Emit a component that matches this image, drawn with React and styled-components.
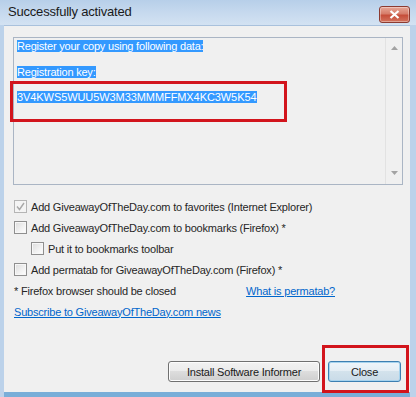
import React from 'react';
import styled, { createGlobalStyle } from 'styled-components';

const GlobalStyle = createGlobalStyle`
  html, body {
    margin: 0;
    padding: 0;
    background: #ffffff;
  }
  body {
    font-family: "Liberation Sans", Arial, sans-serif;
  }
`;

const Window = styled.div`
  position: relative;
  width: 416px;
  height: 397px;
  display: flex;
  flex-direction: column;
  background: #bcd2ea;
  overflow: hidden;
`;

const TitleBar = styled.div`
  height: 25px;
  flex: none;
  display: flex;
  align-items: center;
  justify-content: space-between;
  padding-left: 8px;
  background: linear-gradient(#b7cfe9 0%, #c6d9ee 50%, #d3e2f2 100%);
`;

const Title = styled.span`
  font-size: 13px;
  letter-spacing: -0.2px;
  color: #1a1a1a;
  margin-top: -2px;
`;

const CloseX = styled.div`
  width: 29px;
  height: 15px;
  margin-right: 6px;
  margin-top: 3px;
  border: 1px solid #8c3b31;
  border-radius: 3px;
  background: linear-gradient(#e7a797 0%, #d67d6a 45%, #c64e3a 55%, #d3735d 100%);
  display: flex;
  align-items: center;
  justify-content: center;
  box-shadow: inset 0 0 0 1px rgba(255, 255, 255, 0.35);
`;

const Frame = styled.div`
  flex: 1;
  display: flex;
  flex-direction: column;
  margin: 0 6px 0 4px;
  border-bottom: 5px solid #79aed8;
`;

const Client = styled.div`
  flex: 1;
  display: flex;
  flex-direction: column;
  background: #f0f0f0;
  border-top: 1px solid #a9c1dc;
  padding: 11px 7px 10px 9px;
  color: #262626;
`;

const Memo = styled.div`
  height: 146px;
  display: flex;
  border: 1px solid #aab5c4;
  background: #f0f0f0;
`;

const MemoBody = styled.div`
  flex: 1;
  padding: 2px 0 0 3px;
`;

const MemoLine = styled.div`
  height: 13px;
  line-height: 13px;
  margin-bottom: ${p => p.$gap || 0}px;
  font-size: 11px;
  letter-spacing: ${p => p.$key ? '-0.08px' : '-0.2px'};
  white-space: nowrap;
`;

const Selected = styled.span`
  background: #3399ff;
  color: #ffffff;
`;

const ScrollBar = styled.div`
  width: 16px;
  border-left: 1px solid #e2e2e2;
  display: flex;
  flex-direction: column;
  justify-content: space-between;
  align-items: center;
  padding: 8px 0 9px;
`;

const Options = styled.div`
  margin-top: 11px;
  padding-left: 1px;
  display: flex;
  flex-direction: column;
`;

const Row = styled.div`
  height: 21px;
  display: flex;
  align-items: center;
  gap: 4px;
  padding-left: ${p => p.$indent ? 17 : 0}px;
  font-size: 11px;
  letter-spacing: -0.2px;
  white-space: nowrap;
`;

const Box = styled.span`
  width: 11px;
  height: 11px;
  flex: none;
  border: 1px solid ${p => p.$disabled ? '#b5b5b5' : '#8f8f8f'};
  background: ${p => p.$disabled
    ? '#f4f4f4'
    : 'linear-gradient(135deg, #dcdcdc 0%, #f2f2f2 60%, #ffffff 100%)'};
  box-shadow: inset 0 0 0 1px ${p => p.$disabled ? '#f4f4f4' : '#f7f7f7'};
  display: flex;
  align-items: center;
  justify-content: center;
`;

const NoteRow = styled(Row)`
  justify-content: space-between;
  padding-right: 68px;
`;

const Link = styled.a`
  color: #0066cc;
  text-decoration: underline;
  cursor: pointer;
`;

const ButtonBar = styled.div`
  margin-top: auto;
  display: flex;
  justify-content: flex-end;
  gap: 8px;
  padding-right: 2px;
`;

const Button = styled.button`
  height: 21px;
  width: ${p => p.$w}px;
  padding: 0;
  font-family: "Liberation Sans", Arial, sans-serif;
  font-size: 11px;
  letter-spacing: -0.2px;
  color: #1a1a1a;
  border-radius: 3px;
  border: 1px solid ${p => p.$default ? '#3c7fb1' : '#707070'};
  background: ${p => p.$default
    ? 'linear-gradient(#eef5fa 0%, #e3edf4 50%, #d3e2ec 50%, #c9dbe8 100%)'
    : 'linear-gradient(#f2f2f2 0%, #ebebeb 50%, #dddddd 50%, #cfcfcf 100%)'};
  box-shadow: inset 0 0 0 1px ${p => p.$default ? '#a6d3ee' : '#fcfcfc'};
`;

const Annotation = styled.div`
  position: absolute;
  left: ${p => p.$x}px;
  top: ${p => p.$y}px;
  width: ${p => p.$w}px;
  height: ${p => p.$h}px;
  box-sizing: border-box;
  border: 3px solid #d2141c;
  pointer-events: none;
`;

const Check = () => (
  <svg width="9" height="9" viewBox="0 0 9 9">
    <path d="M1 4.5 L3.5 7.5 L8 1" fill="none" stroke="#a8a8a8" strokeWidth="1.4" />
  </svg>
);

const Arrow = ({ up }) => (
  <svg width="7" height="4" viewBox="0 0 7 4">
    <path d={up ? 'M0 4 L3.5 0 L7 4 Z' : 'M0 0 L7 0 L3.5 4 Z'} fill="#a3a3a3" />
  </svg>
);

export default function App() {
  return (
    <>
      <GlobalStyle />
      <Window>
        <TitleBar>
          <Title>Successfully activated</Title>
          <CloseX>
            <svg width="11" height="9" viewBox="0 0 11 9">
              <path d="M1.5 1 L9.5 8 M9.5 1 L1.5 8" stroke="#ffffff" strokeWidth="2.2" />
            </svg>
          </CloseX>
        </TitleBar>
        <Frame>
          <Client>
            <Memo>
              <MemoBody>
                <MemoLine $gap={13}><Selected>Register your copy using following data:</Selected></MemoLine>
                <MemoLine $gap={12}><Selected>Registration key:</Selected></MemoLine>
                <MemoLine $key><Selected>3V4KWS5WUU5W3M33MMMFFMX4KC3W5K54</Selected></MemoLine>
              </MemoBody>
              <ScrollBar>
                <Arrow up />
                <Arrow />
              </ScrollBar>
            </Memo>
            <Options>
              <Row><Box $disabled><Check /></Box>Add GiveawayOfTheDay.com to favorites (Internet Explorer)</Row>
              <Row><Box />Add GiveawayOfTheDay.com to bookmarks (Firefox) *</Row>
              <Row $indent><Box />Put it to bookmarks toolbar</Row>
              <Row><Box />Add permatab for GiveawayOfTheDay.com (Firefox) *</Row>
              <NoteRow>
                <span>* Firefox browser should be closed</span>
                <Link>What is permatab?</Link>
              </NoteRow>
              <Row><Link>Subscribe to GiveawayOfTheDay.com news</Link></Row>
            </Options>
            <ButtonBar>
              <Button $w={152}>Install Software Informer</Button>
              <Button $w={73} $default>Close</Button>
            </ButtonBar>
          </Client>
        </Frame>
        <Annotation $x={10} $y={81} $w={277} $h={41} />
        <Annotation $x={322} $y={345} $w={87} $h={48} />
      </Window>
    </>
  );
}
